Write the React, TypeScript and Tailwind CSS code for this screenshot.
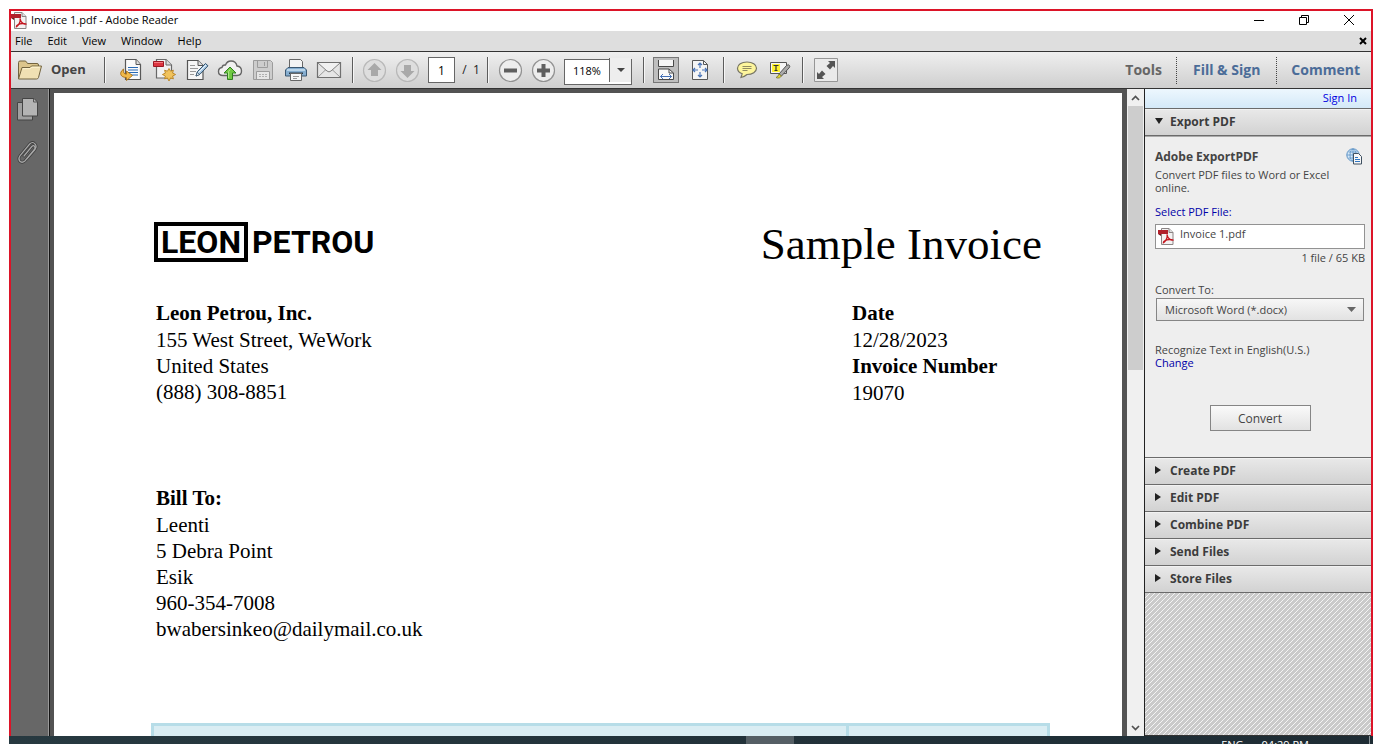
import type { ReactNode } from "react";

const etched = "h-[26px] w-[2px] shrink-0 border-l border-[#5c5c5c] bg-[#f6f6f6]";

function Separator({ className = "" }: { className?: string }) {
  return <div className={`${etched} ${className}`} />;
}

function ToolButton({ label, children }: { label: string; children: ReactNode }) {
  return (
    <button type="button" aria-label={label} className="flex h-8 w-[33px] shrink-0 items-center justify-center">
      {children}
    </button>
  );
}

function PdfIcon() {
  return (
    <svg width="16" height="17" viewBox="0 0 16 17" className="shrink-0">
      <path d="M3.500 .5h7.500l4 4v12h-11.500z" fill="#f4f2f2" stroke="#8b8484" />
      <path d="M11 .5v4h4" fill="#ddd" stroke="#8b8484" />
      <path d="M0 2h10v4H0z" fill="#b1202b" />
      <path d="M0 6l3 2V6z" fill="#70141b" />
      <path d="M9 6.500c1 3-1.500 7-3.500 8 0-2 6-4 9-2.500-2 .6-5-2-5.500-5.500z" fill="none" stroke="#c3141d" strokeWidth="1.400" />
    </svg>
  );
}

function FolderIcon() {
  return (
    <svg width="26" height="22" viewBox="0 0 26 22">
      <path d="M1.500 19.500V3.500q0-1.500 1.500-1.500h5q1 0 1.500 1l1 1.500H20q1.500 0 1.500 1.500v3" fill="#dcc58c" stroke="#73643f" />
      <path d="M1.500 20L5 8.500h8L14.500 7H24.500L21.500 18.500Q21 20 19.500 20z" fill="#f0e0b3" stroke="#73643f" />
      <path d="M5.800 9.700h7.500l1.500-1.500h8" fill="none" stroke="#fff5d3" />
    </svg>
  );
}

function ConvertIcon() {
  return (
    <svg width="24" height="24" viewBox="0 0 24 24">
      <path d="M6.500 1.500H17l4.500 5v15h-15z" fill="#fafafa" stroke="#585858" strokeWidth="1.200" />
      <path d="M17 1.500v5h4.500" fill="#ddd" stroke="#585858" />
      <path d="M9 9.500h10M9 12h10M9 14.500h10M11 17h8" stroke="#2769b5" />
      <path d="M4.500 11c-5 4-3 8.500 3 8.500V22.500l6-5-6-4.500v3.200c-2.500 0-3.500-1.700-3-5.200z" fill="#f0b94a" stroke="#a66e15" strokeWidth=".9" />
    </svg>
  );
}

function CreateIcon() {
  return (
    <svg width="24" height="24" viewBox="0 0 24 24">
      <path d="M4.500 1.500H14l5.500 5.500v13h-15z" fill="#f2f2f2" stroke="#686868" strokeWidth="1.200" />
      <path d="M14 1.500V7h5.500" fill="#ddd" stroke="#686868" />
      <path d="M1.500 3.500h10v5H1.500z" fill="#dc3540" stroke="#9c1722" />
      <path d="M2 4.500h9" stroke="#f57c83" />
      <path d="M17 10.500l1.600 2.700 2.800-1-.8 2.900 3 1.400-3 1.500.8 2.900-2.800-1L17 23l-1.600-3.100-2.800 1 .8-2.900-3-1.500 3-1.400-.8-2.900 2.800 1z" fill="#f1c35d" stroke="#b98220" strokeWidth=".9" />
    </svg>
  );
}

function EditIcon() {
  return (
    <svg width="24" height="24" viewBox="0 0 24 24">
      <path d="M2.500 2.500H13l5 5v14H2.500z" fill="#f6f6f6" stroke="#555" strokeWidth="1.200" />
      <path d="M13 2.500v5h5" fill="#ddd" stroke="#555" />
      <path d="M5 7.500h5M5 10.500h8M5 13.500h6M5 16.500h4" stroke="#999" />
      <path d="M11 18l1.500-4.500 8-8 2.500 2.300-8 8.400z" fill="#a9c9e4" stroke="#34536d" />
      <path d="M11 18l1.200-3.600 2.400 2.200z" fill="#eef5fa" stroke="#34536d" strokeWidth=".8" />
      <path d="M13.500 14.500l7.500-7.500" stroke="#eef5fa" />
    </svg>
  );
}

function CloudIcon() {
  return (
    <svg width="26" height="24" viewBox="0 0 26 24">
      <path d="M6 17.500Q1.500 17.500 1.500 13.500 1.500 10 5 9.500 5.500 6.500 8.500 7 10 3 14 3q5 0 6 5 4.500.5 4.500 5 0 4.500-4.500 4.500z" fill="#f1f1f1" stroke="#656565" strokeWidth="1.400" />
      <path d="M13 9l6 6h-3.500v6.500h-5V15H7z" fill="#70c943" stroke="#308021" />
      <path d="M11.600 20v-6.500l1.400-2" fill="none" stroke="#b5ed93" />
    </svg>
  );
}

function SaveIcon() {
  return (
    <svg width="22" height="22" viewBox="0 0 22 22">
      <path d="M1.500 1.500h17l2 2v17h-19z" fill="#cdcdcd" stroke="#9c9c9c" />
      <path d="M5.500 1.500v7h10v-7M12.500 3v4" fill="none" stroke="#9c9c9c" />
      <path d="M4.500 20v-7.500h13V20" fill="#e6e6e6" stroke="#9c9c9c" />
      <path d="M7 15.500h8M7 17.500h8" stroke="#b0b0b0" strokeDasharray="2 1" />
    </svg>
  );
}

function PrintIcon() {
  return (
    <svg width="24" height="24" viewBox="0 0 24 24">
      <path d="M5.500 10V1.500h11l2 2V10z" fill="#f4f4f4" stroke="#666" />
      <path d="M4 9.500h16l2.500 2.500v6h-21v-6z" fill="#86aed0" stroke="#3c5871" />
      <path d="M3 12h18" stroke="#cde2f2" strokeWidth="1.500" />
      <path d="M5 14.500h14v1.500H5z" fill="#263746" />
      <path d="M6.500 15.500h11v7h-11z" fill="#f7f7f7" stroke="#666" />
      <path d="M9 18.500h6M9 20.500h4" stroke="#999" />
    </svg>
  );
}

function MailIcon() {
  return (
    <svg width="26" height="18" viewBox="0 0 26 18">
      <path d="M1.500 1.500h23v15h-23z" fill="#e6e6e6" stroke="#707070" strokeWidth="1.200" />
      <path d="M2 16l8.500-8M24 16l-8.500-8" fill="none" stroke="#9a9a9a" />
      <path d="M2 2l9 8q2 1.800 4 0l9-8" fill="#f1f1f1" stroke="#808080" />
    </svg>
  );
}

function RoundIcon({ path, enabled = false }: { path: string; enabled?: boolean }) {
  return (
    <svg width="25" height="25" viewBox="0 0 25 25">
      <circle cx="12.500" cy="12.500" r="11" fill={enabled ? "#ededed" : "#dedede"} stroke={enabled ? "#929292" : "#b8b8b8"} strokeWidth="1.200" />
      <path d={path} fill={enabled ? "#5f5f5f" : "#a9a9a9"} />
    </svg>
  );
}

function FitWidthIcon() {
  return (
    <svg width="18" height="22" viewBox="0 0 18 22" className="shrink-0">
      <path d="M1.500 1v6.500h15V1" fill="#f5f5f5" stroke="#484848" />
      <path d="M1.500 20.500v-10.500H12l4.500 4v6.500z" fill="#f8f8f8" stroke="#484848" />
      <path d="M12 10v4h4.500" fill="none" stroke="#484848" />
      <path d="M3.500 17.500h11M6 15l-2.500 2.500L6 20M12 15l2.500 2.500L12 20" fill="none" stroke="#426eb4" />
    </svg>
  );
}

function FitPageIcon() {
  return (
    <svg width="20" height="22" viewBox="0 0 20 22">
      <path d="M2.500 1.500h11l4 4v15h-15z" fill="#f5f5f5" stroke="#585858" />
      <path d="M13.500 1.500v4h4" fill="none" stroke="#585858" />
      <path d="M10 4v5M10 13v5M3 11h5M12 11h5M8 6l2-2 2 2M8 16l2 2 2-2M5 9l-2 2 2 2M15 9l2 2-2 2" fill="none" stroke="#4a75b8" strokeWidth="1.200" />
    </svg>
  );
}

function CommentIcon() {
  return (
    <svg width="22" height="20" viewBox="0 0 22 20">
      <path d="M5 17.500l1.200-3.800Q1.500 12 1.500 8.200C1.500 4.500 5.500 2 11 2s9.500 2.600 9.500 6.200-4 6.300-9.500 6.300Q8.500 16.800 5 17.500z" fill="#fdf59c" stroke="#777564" strokeWidth="1.200" />
      <path d="M6.500 6.500h9M6.500 8.500h9M6.500 10.500h5" stroke="#85805a" strokeWidth=".9" />
    </svg>
  );
}

function HighlightIcon() {
  return (
    <svg width="22" height="20" viewBox="0 0 22 20">
      <path d="M1.500 2.500h16v11h-16z" fill="#f6f6f6" stroke="#555" />
      <path d="M3 4h8v8H3z" fill="#fff22e" />
      <path d="M4.500 5.500h5M7 5.500v5M5.500 10.500h3" stroke="#333" strokeWidth="1.200" />
      <path d="M10 14l7.500-8.500q2-1.500 3 0 .8 1-.5 2.500L12.500 16z" fill="#aaa" stroke="#555" />
      <path d="M10 14l2.500 2-2 1.800q-2 .7-3.500-.3 2-.5 3-3.500z" fill="#e1d934" stroke="#777134" strokeWidth=".8" />
    </svg>
  );
}

function ExpandIcon() {
  return (
    <svg width="24" height="24" viewBox="0 0 24 24">
      <path d="M.5 .5h23v23H.5z" fill="#eaeaea" stroke="#969696" />
      <path d="M14 3h7v7l-2-2-3 3.500-3.500-3.500L16 5zM3 14l2 2 3-3.500 3.500 3.500L8 19l2 2H3z" fill="#555" />
    </svg>
  );
}

function WebDocIcon() {
  return (
    <svg width="17" height="17" viewBox="0 0 17 17">
      <circle cx="7" cy="7" r="6.200" fill="#d6e9f8" stroke="#5b91c4" />
      <path d="M1 7h12M7 1v12M2.500 4h9M2.500 10h9" stroke="#5b91c4" strokeWidth=".8" />
      <ellipse cx="7" cy="7" rx="3" ry="6" fill="none" stroke="#5b91c4" strokeWidth=".8" />
      <path d="M7.500 5.500h5l3 3v7.500h-8z" fill="#f7f7f7" stroke="#3e5061" />
      <path d="M9 9.500h3M9 11.500h5M9 13.500h5" stroke="#2d76c4" />
    </svg>
  );
}

const tools = [
  { label: "Convert file", icon: <ConvertIcon /> },
  { label: "Create PDF online", icon: <CreateIcon /> },
  { label: "Edit PDF", icon: <EditIcon /> },
  { label: "Upload", icon: <CloudIcon /> },
  { label: "Save", icon: <SaveIcon /> },
  { label: "Print", icon: <PrintIcon /> },
  { label: "Email", icon: <MailIcon /> },
];

function TitleBar() {
  return (
    <header className="flex h-5 shrink-0 items-center bg-white pb-0.5 text-[11px] text-black">
      <PdfIcon />
      <h1 className="ml-1 flex-1">Invoice 1.pdf - Adobe Reader</h1>
      <div className="flex gap-[25px] pr-3">
        <button type="button" aria-label="Minimize" className="flex size-5 items-center justify-center">
          <svg width="12" height="12" viewBox="0 0 12 12"><path d="M1 6.500h10" stroke="#000" /></svg>
        </button>
        <button type="button" aria-label="Restore" className="flex size-5 items-center justify-center">
          <svg width="12" height="12" viewBox="0 0 12 12" fill="none" stroke="#000"><path d="M1.500 3.500h7v7h-7zM3.500 3V1.500h7v7H9" /></svg>
        </button>
        <button type="button" aria-label="Close" className="flex size-5 items-center justify-center">
          <svg width="12" height="12" viewBox="0 0 12 12"><path d="M1 1l10 10M11 1L1 11" stroke="#000" /></svg>
        </button>
      </div>
    </header>
  );
}

function MenuBar() {
  return (
    <nav className="flex h-[21px] shrink-0 items-center gap-[15px] border-b border-[#333] bg-[#dedede] pl-1 text-[11px] text-black">
      {["File", "Edit", "View", "Window", "Help"].map((name) => (
        <button type="button" key={name}>{name}</button>
      ))}
      <button type="button" aria-label="Close document" className="mr-1 ml-auto">
        <svg width="8" height="8" viewBox="0 0 8 8"><path d="M1 1l6 6M7 1L1 7" stroke="#000" strokeWidth="2" /></svg>
      </button>
    </nav>
  );
}

function Toolbar() {
  return (
    <div className="flex h-[37px] shrink-0 items-center border-b border-[#333] bg-linear-to-b from-[#efefef] to-[#cfcfcf]">
      <button type="button" className="flex w-[93px] shrink-0 items-center gap-2 pl-[6px] text-[13px] font-bold text-[#444]">
        <FolderIcon />
        Open
      </button>
      <Separator className="mr-2" />
      {tools.map((tool) => (
        <ToolButton key={tool.label} label={tool.label}>{tool.icon}</ToolButton>
      ))}
      <Separator className="mr-1 ml-[7px]" />
      <ToolButton label="Previous page"><RoundIcon path="M12.500 5l7 7H16v6H9v-6H5.500z" /></ToolButton>
      <ToolButton label="Next page"><RoundIcon path="M12.500 20l7-7H16V7H9v6H5.500z" /></ToolButton>
      <input aria-label="Page number" defaultValue="1" className="ml-1 h-[26px] w-[27px] shrink-0 border border-[#666] bg-white text-center text-[12px] text-black" />
      <span className="w-8 shrink-0 text-center text-[12px] whitespace-nowrap text-[#222]">/&nbsp; 1</span>
      <Separator className="mr-[5px]" />
      <ToolButton label="Zoom out"><RoundIcon enabled path="M6 10.500h13v4H6z" /></ToolButton>
      <ToolButton label="Zoom in"><RoundIcon enabled path="M10.500 6h4v4.500H19v4h-4.500V19h-4v-4.500H6v-4h4.500z" /></ToolButton>
      <div className="relative ml-1 h-[26px] w-[68px] shrink-0">
        <select aria-label="Zoom level" className="size-full appearance-none border border-[#666] bg-white pb-0.5 pl-2 text-[11px] text-black">
          <option>118%</option>
        </select>
        <span className="pointer-events-none absolute inset-y-px right-px flex w-[22px] items-center justify-center border-l border-[#666] bg-[#eee]">
          <svg width="8" height="4" viewBox="0 0 8 4"><path d="M0 0h8L4 4z" fill="#444" /></svg>
        </span>
      </div>
      <Separator className="mr-[8px] ml-[11px]" />
      <button type="button" aria-label="Fit width" aria-pressed="true" className="flex size-[26px] shrink-0 items-center justify-center border border-[#777] bg-[#bebebe]">
        <FitWidthIcon />
      </button>
      <div className="ml-1 flex"><ToolButton label="Fit page"><FitPageIcon /></ToolButton></div>
      <Separator className="mr-[5px] ml-[7px]" />
      <ToolButton label="Add comment"><CommentIcon /></ToolButton>
      <ToolButton label="Highlight text"><HighlightIcon /></ToolButton>
      <Separator className="mr-[5px] ml-[6px]" />
      <ToolButton label="Read mode"><ExpandIcon /></ToolButton>
      <div className="ml-auto flex items-center text-[14px] font-bold whitespace-nowrap text-[#4b6c98]">
        <button type="button" className="h-[27px] px-[14px] pb-0.5 text-[#666]">Tools</button>
        <button type="button" className="h-[27px] border-l border-dotted border-[#444] px-4 pb-0.5">Fill &amp; Sign</button>
        <button type="button" className="h-[27px] border-l border-dotted border-[#444] pr-[11px] pb-0.5 pl-[14px]">Comment</button>
      </div>
    </div>
  );
}

function Sidebar() {
  const clip = "M8 16L15.800 6.500q1.800-1.500 2.800-.2 1 1.400-.2 3.200L8.900 21q-3 2.500-5.300 0-1.700-2.500.5-5.500L13.700 4q3-3 5.300 0 2.200 2.500 0 5.500L10.700 19";
  return (
    <aside className="flex w-[39px] shrink-0 flex-col items-center gap-[17px] border-r border-[#151515] bg-[#676767] pt-2 pr-[5px] shadow-[inset_-1px_0_#999]">
      <button type="button" aria-label="Page thumbnails">
        <svg width="23" height="26" viewBox="0 0 23 26">
          <path d="M1.500 5.500h15v17.500h-15z" fill="#a0a0a0" stroke="#444" />
          <path d="M6.500 1.500H18l3.500 3.500v14h-15z" fill="#b4b4b4" stroke="#444" />
          <path d="M17.500 1.500V5h4" fill="none" stroke="#555" />
        </svg>
      </button>
      <button type="button" aria-label="Attachments">
        <svg width="24" height="25" viewBox="0 0 24 25" fill="none" strokeLinecap="round">
          <path d={clip} stroke="#3e3e3e" strokeWidth="2.800" />
          <path d={clip} stroke="#a8a8a8" strokeWidth="1.200" />
        </svg>
      </button>
    </aside>
  );
}

function Document() {
  return (
    <main className="min-w-0 flex-1 overflow-hidden bg-[#535353] pt-1 pr-[5px] pl-1">
      <article className="min-h-full bg-white pt-[129px] pr-[72px] pl-[97px] font-['Liberation_Serif',serif] text-[21px] leading-[26px] text-black">
        <div className="flex items-start justify-between pl-[3px]">
          <div className="flex items-center font-[Roboto,sans-serif] text-[32px] leading-[32px] font-bold">
            <span className="border-4 border-black px-[3px]">LEON</span>
            <span className="pl-1">PETROU</span>
          </div>
          <h2 className="pr-2 text-[45px] leading-[44px]">Sample Invoice</h2>
        </div>
        <div className="mt-[34px] flex justify-between pl-[5px]">
          <address className="not-italic">
            <strong className="mb-px block">Leon Petrou, Inc.</strong>
            155 West Street, WeWork<br />
            United States<br />
            (888) 308-8851
          </address>
          <div className="w-[198px]">
            <strong className="mb-px block">Date</strong>
            12/28/2023
            <strong className="mb-px block">Invoice Number</strong>
            19070
          </div>
        </div>
        <address className="mt-[79px] pl-[5px] not-italic">
          <strong className="mb-px block">Bill To:</strong>
          Leenti<br />
          5 Debra Point<br />
          Esik<br />
          960-354-7008<br />
          bwabersinkeo@dailymail.co.uk
        </address>
        <div className="mt-[81px] grid h-12 grid-cols-[7fr_2fr] border-3 border-[#b7dde8] bg-[#daedf3]">
          <div className="border-r-3 border-[#b7dde8]" />
          <div />
        </div>
      </article>
    </main>
  );
}

function ScrollBar() {
  return (
    <div className="flex w-[17px] shrink-0 flex-col items-center bg-[#f0f0f0]">
      <button type="button" aria-label="Scroll up" className="flex h-[17px] w-full items-center justify-center">
        <svg width="9" height="6" viewBox="0 0 9 6"><path d="M1 5l3.500-3.500L8 5" fill="none" stroke="#505050" strokeWidth="1.700" /></svg>
      </button>
      <div className="flex w-full flex-1 flex-col px-px">
        <div className="h-[43%] bg-[#cdcdcd]" />
      </div>
      <button type="button" aria-label="Scroll down" className="flex h-[17px] w-full items-center justify-center">
        <svg width="9" height="6" viewBox="0 0 9 6"><path d="M1 1l3.500 3.500L8 1" fill="none" stroke="#505050" strokeWidth="1.700" /></svg>
      </button>
    </div>
  );
}

const sectionHeader =
  "flex h-[27px] w-full shrink-0 items-center gap-[7px] border-b border-[#6b6b6b] bg-linear-to-b from-[#e9e9e9] to-[#d2d2d2] pb-0.5 pl-[10px] text-left text-[12px] font-bold text-[#3c3c3c] shadow-[inset_0_1px_#f2f2f2]";

function ToolsPanel() {
  return (
    <aside className="flex w-[227px] shrink-0 flex-col border-l border-[#222] bg-[#eee] text-[11px] leading-[13px] text-[#444]">
      <div className="flex h-5 shrink-0 items-center justify-end border-b border-[#6b6b6b] bg-linear-to-b from-[#edf7fe] to-[#d4e9f8] pr-[14px] pb-0.5">
        <a href="#sign-in" className="text-[#0000e0]">Sign In</a>
      </div>
      <button type="button" aria-expanded="true" className={sectionHeader}>
        <svg width="8" height="6" viewBox="0 0 8 6"><path d="M0 0h8L4 6z" fill="#222" /></svg>
        Export PDF
      </button>
      <section className="flex h-[322px] shrink-0 flex-col border-t border-b border-t-[#aaa] border-b-[#6b6b6b] pr-[6px] pl-[10px]">
        <div className="mt-[11px] flex items-center justify-between pr-[2px]">
          <h2 className="text-[12px] font-bold">Adobe ExportPDF</h2>
          <WebDocIcon />
        </div>
        <p className="mt-[3px]">Convert PDF files to Word or Excel<br />online.</p>
        <a href="#select" className="mt-[11px] text-[#0000a8]">Select PDF File:</a>
        <div className="mt-[6px] flex h-[25px] items-center gap-[6px] border border-[#929292] bg-white pl-[2px]">
          <PdfIcon />
          <span className="pb-1.5">Invoice 1.pdf</span>
        </div>
        <span className="mt-[2px] text-right">1 file / 65 KB</span>
        <label htmlFor="format" className="mt-[19px]">Convert To:</label>
        <div className="relative mt-[2px] mr-px ml-px h-[23px]">
          <select id="format" className="size-full appearance-none border border-[#858585] bg-linear-to-b from-[#f7f7f7] to-[#e2e2e2] pl-2 text-[11px] text-[#444]">
            <option>Microsoft Word (*.docx)</option>
          </select>
          <svg width="9" height="5" viewBox="0 0 9 5" className="pointer-events-none absolute top-[9px] right-2"><path d="M0 0h9L4.500 5z" fill="#666" /></svg>
        </div>
        <p className="mt-[22px]">Recognize Text in English(U.S.)</p>
        <a href="#language" className="text-[#0000a8]">Change</a>
        <button type="button" className="mt-9 h-[26px] w-[101px] self-center border border-[#858585] bg-linear-to-b from-[#fafafa] to-[#e2e2e2] text-[12px]">
          Convert
        </button>
      </section>
      {["Create PDF", "Edit PDF", "Combine PDF", "Send Files", "Store Files"].map((name) => (
        <button type="button" aria-expanded="false" key={name} className={sectionHeader}>
          <svg width="8" height="8" viewBox="0 0 8 8"><path d="M0 0l6 4-6 4z" fill="#222" /></svg>
          {name}
        </button>
      ))}
      <div className="flex-1 border-b border-[#333] bg-[linear-gradient(135deg,#f4f4f4_0_10%,#cacaca_10%_50%,#f4f4f4_50%_60%,#cacaca_60%)] bg-[length:5px_5px]" />
    </aside>
  );
}

export default function App() {
  return (
    <div className="flex h-screen flex-col bg-white px-[9px] pt-[9px] font-['Open_Sans','Noto_Sans',sans-serif]">
      <div className="flex min-h-0 flex-1 flex-col border-2 border-b-0 border-[#dc1428]">
        <TitleBar />
        <MenuBar />
        <Toolbar />
        <div className="flex min-h-0 flex-1">
          <Sidebar />
          <Document />
          <ScrollBar />
          <ToolsPanel />
        </div>
      </div>
      <footer className="flex h-2 shrink-0 justify-end overflow-hidden bg-linear-to-r from-[#273940] to-[#1e2c34] text-[11px] leading-[15px] text-white">
        <span className="mr-auto ml-[54%] h-2 w-12 bg-[#555f65]" />
        <span className="pt-px">ENG</span>
        <span className="mr-[60px] ml-[18px] pt-px">04:29 PM</span>
        <span className="mr-[3px] h-2 w-px bg-[#8b9499]" />
      </footer>
    </div>
  );
}
